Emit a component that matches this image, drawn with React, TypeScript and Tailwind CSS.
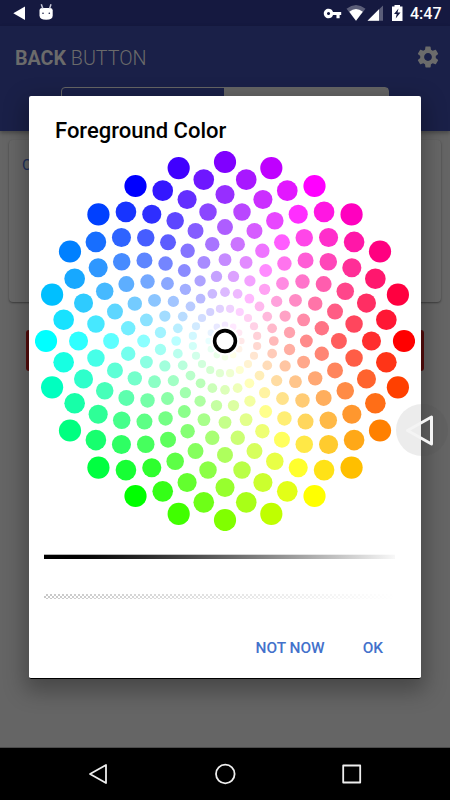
import { MdSettings, MdVpnKey } from 'react-icons/md';

const DENSITY = 12;
const MAX_RADIUS = 179;
const CENTER = 190;
const BASE_SIZE = 7.8;

const hsvToRgb = (h: number, s: number, v: number) => {
  const f = (n: number) => {
    const k = (n + h / 60) % 6;
    return Math.round(255 * (v - v * s * Math.max(0, Math.min(k, 4 - k, 1))));
  };
  return `rgb(${f(5)}, ${f(3)}, ${f(1)})`;
};

// number of dots on each ring, the center ring has a single one
const ringCounts = [1, 12, 20, 24, 24, 24, 24, 24, 24, 24, 24, 24];

const dots = ringCounts.flatMap((total, i) => {
  const p = i / (DENSITY - 1);
  const size = BASE_SIZE * (0.4 + 0.1 * i) - 0.6;
  return Array.from({ length: total }, (_, j) => {
    const angle = (Math.PI * 2 * j) / total + (Math.PI / total) * ((i + 1) % 2);
    return {
      key: `${i}-${j}`,
      x: CENTER + MAX_RADIUS * p * Math.cos(angle),
      y: CENTER + MAX_RADIUS * p * Math.sin(angle),
      r: size,
      color: hsvToRgb((angle * 180) / Math.PI, p, 1),
    };
  });
});

const ColorWheel = () => (
  <svg width="380" height="380" viewBox="0 0 380 380" className="block shrink-0">
    {dots.map((d) => (
      <circle key={d.key} cx={d.x} cy={d.y} r={d.r} fill={d.color} />
    ))}
    <circle cx={CENTER} cy={CENTER} r="14.5" fill="#fff" />
    <circle cx={CENTER} cy={CENTER} r="10.4" fill="#fff" stroke="#000" strokeWidth="3.6" />
  </svg>
);

const StatusBar = () => (
  <div className="h-[26px] shrink-0 bg-[#151940] flex items-center justify-between">
    <svg width="60" height="26" viewBox="0 0 60 26" fill="#fff">
      <path d="M13.3 13.3 25 6.6V20z" />
      <path d="M39.5 10.5Q39.5 8 42 8H50.5Q52.7 8 52.7 10.5V15.5Q52.7 19.8 46.2 19.8T39.5 15.5z" />
      <path d="M41.3 4.3 42.8 8.5M51 4.3 49.6 8.5" stroke="#c4c6d6" strokeWidth="1.5" />
      <circle cx="43" cy="13.2" r=".8" fill="#151940" />
      <circle cx="49.3" cy="13.2" r=".8" fill="#151940" />
    </svg>
    <div className="flex items-center">
      <MdVpnKey className="w-[19px] h-[19px] -mr-px text-white" />
      <svg width="64" height="26" viewBox="0 0 64 26" fill="#fff">
        <path d="M5.5 8.8Q15 1.4 24.5 8.8L15 20.7z" opacity=".3" />
        <path d="M8.3 11.8Q15 6.4 21.8 11.8L15 20.7z" />
        <path d="M26.5 20.7 42 5.5V20.7z" opacity=".3" />
        <path d="M26.5 20.7 38 9.2V20.7z" />
        <path d="M51 6.5H53.5V5H59V6.5H61.5V21H51z" />
        <path d="M57.5 8.5 53 14H55.7L54.7 18.5 59.5 12.5H56.5z" fill="#151940" />
      </svg>
      <span className="ml-[5px] mr-[9px] w-[31px] pt-px text-[16px] leading-[25px] font-medium text-white whitespace-nowrap">4:47</span>
    </div>
  </div>
);

const NavBar = () => (
  <div className="h-[53px] shrink-0 bg-black border-t border-[#4a4a4a] flex items-center justify-between pl-[87px] pr-[88px]">
    <svg width="22" height="24" viewBox="0 0 22 24" fill="none" stroke="#eee" strokeWidth="1.8" strokeLinejoin="round">
      <path d="M3 12 19 3V21z" />
    </svg>
    <svg width="22" height="24" viewBox="0 0 22 24" fill="none" stroke="#eee" strokeWidth="1.8">
      <circle cx="11.3" cy="12" r="9.3" />
    </svg>
    <svg width="22" height="24" viewBox="0 0 22 24" fill="none" stroke="#eee" strokeWidth="1.8" strokeLinejoin="round">
      <rect x="3.2" y="3.5" width="17" height="17" />
    </svg>
  </div>
);

const ColorDialog = () => (
  <div className="absolute left-[29px] top-[96px] w-[392px] h-[583px] bg-white rounded-[2px] border-b border-black shadow-[0_8px_22px_4px_rgba(0,0,0,0.3)] flex flex-col overflow-hidden">
    <h2 className="pl-[26px] pt-[21px] text-[22px] leading-[28px] font-medium text-black">Foreground Color</h2>
    <div className="mt-[6px] flex justify-center">
      <ColorWheel />
    </div>
    {/* lightness */}
    <div className="mt-[23px] ml-[15px] w-[351px] h-[5px] border-t border-white/70 bg-linear-to-r from-black to-[#f8f8f8] bg-origin-border" />
    {/* alpha */}
    <div className="mt-[35px] ml-[15px] w-[351px] h-[5px] bg-[repeating-conic-gradient(#c8c8c8_0_25%,#fff_0_50%)] bg-[length:4px_4px]">
      <div className="h-full bg-linear-to-r from-transparent to-white" />
    </div>
    <div className="mt-[39px] pr-[38px] flex justify-end gap-[38px] text-[15.4px] leading-[20px] font-medium text-[#4371cb]">
      <button>NOT NOW</button>
      <button>OK</button>
    </div>
  </div>
);

export default function App() {
  return (
    <div className="relative w-[450px] h-[800px] overflow-hidden flex flex-col bg-[#656565] font-[Roboto,sans-serif]">
      <StatusBar />
      <header className="h-[105px] shrink-0 bg-[#1a2048] shadow-[0_2px_4px_rgba(0,0,0,0.3)]">
        <div className="h-[62px] flex items-center justify-between pl-[15px] pr-[9px] text-[#6b6b6b]">
          <h1 className="pt-[3px] text-[19.7px] font-light">
            <b className="font-bold">BACK</b> BUTTON
          </h1>
          <MdSettings className="w-[26px] h-[26px]" />
        </div>
        <div className="mx-[61px] -mt-px h-[40px] rounded-[4px] border border-[#656565] flex">
          <div className="w-[162px]" />
          <div className="flex-1 bg-[#656565]" />
        </div>
      </header>
      <main className="flex-1 pt-[9px]">
        <section className="mx-[9px] h-[162px] rounded-[4px] bg-[#676767] shadow-[0_1px_2px_rgba(0,0,0,0.4)] pl-[13px] pt-[14px] text-[15px] text-[#1d2f5c]">
          Colors
        </section>
        <div className="mt-[28px] mx-[26px] h-[41px] rounded-[3px] bg-[#550b0b]" />
      </main>
      <NavBar />
      <ColorDialog />
      <div className="absolute left-[396px] top-[404px] w-[52px] h-[52px] rounded-full bg-[#404040]/10">
        <svg width="52" height="52" viewBox="0 0 52 52" fill="none" stroke="#f4f4f4" strokeWidth="3" strokeLinejoin="round">
          <path d="M11.5 26.500 35.500 13V40z" />
        </svg>
      </div>
    </div>
  );
}
